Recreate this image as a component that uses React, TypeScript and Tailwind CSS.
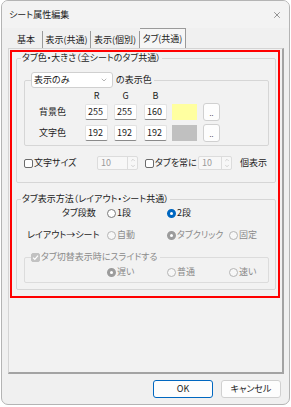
import { X, ChevronDown, ChevronUp } from "lucide-react"

// Small Win11-ish form controls
function Radio({ label, checked, disabled, className = "" }: { label: string; checked?: boolean; disabled?: boolean; className?: string }) {
  const ring = checked
    ? disabled
      ? "border-[3px] border-[#9c9c9c] bg-white"
      : "border-[3px] border-[#0067c0] bg-white"
    : disabled
      ? "border border-[#b5b5b5] bg-[#f7f7f7]"
      : "border border-[#7a7a7a] bg-white"
  return (
    <div className={"flex items-center " + className}>
      <span className={"w-[9px] h-[9px] rounded-full box-border shrink-0 " + ring} />
      <span className={"ml-[1px] " + (disabled ? "text-[#8a8a8a]" : "text-[#1b1b1b]")}>{label}</span>
    </div>
  )
}

function Check({ label, checked, disabled }: { label: string; checked?: boolean; disabled?: boolean }) {
  return (
    <div className="flex items-center">
      <span
        className={
          "w-[9px] h-[9px] rounded-[2px] box-border flex items-center justify-center shrink-0 " +
          (checked ? "bg-[#c2c2c2] border border-[#c2c2c2]" : "border border-[#6b6b6b] bg-white")
        }
      >
        {checked && (
          <svg width="7" height="7" viewBox="0 0 7 7">
            <path d="M1 3.6 L2.8 5.3 L6 1.6" fill="none" stroke="white" strokeWidth="1.2" />
          </svg>
        )}
      </span>
      <span className={"ml-[1px] " + (disabled ? "text-[#8a8a8a]" : "text-[#1b1b1b]")}>{label}</span>
    </div>
  )
}

function NumBox({ value }: { value: number }) {
  return (
    <div className="w-[23px] h-[16px] bg-white border border-[#e2e2e2] border-b-[#8a8a8a] rounded-[2px] box-border pl-[2px] leading-[14px] text-[#1b1b1b]">
      {value}
    </div>
  )
}

function Dots() {
  return (
    <div className="w-[17px] h-[18px] bg-[#fdfdfd] border border-[#d0d0d0] rounded-[3px] box-border flex items-end justify-center pb-[3px]">
      <span className="text-[7px] leading-[7px] text-[#333]">..</span>
    </div>
  )
}

function Spin({ w }: { w: string }) {
  return (
    <div className={"h-[14px] bg-[#f7f7f7] border border-[#dcdcdc] rounded-[2px] box-border flex " + w}>
      <span className="flex-1 pl-[3px] leading-[12px] text-[#9a9a9a]">10</span>
      <span className="w-[10px] border-l border-[#dcdcdc] flex flex-col items-center justify-center text-[#9a9a9a]">
        <ChevronUp size={6} strokeWidth={1.5} />
        <ChevronDown size={6} strokeWidth={1.5} />
      </span>
    </div>
  )
}

const rgbRows = [
  { name: "背景色", values: [255, 255, 160], swatch: "bg-[#ffffa0]" },
  { name: "文字色", values: [192, 192, 192], swatch: "bg-[#c0c0c0]" },
]

export default function App() {
  return (
    <div className="w-[291px] h-[407px] bg-white font-['Noto_Sans_CJK_JP',sans-serif] [font-feature-settings:'palt'] text-[9px] leading-[12px] text-[#1b1b1b]">
      <div className="ml-[1px] w-[289px] h-[405px] rounded-[7px] border border-[#b4b4b4] bg-[#f0f0f0] box-border flex flex-col overflow-hidden">
        {/* Title bar */}
        <div className="h-[27px] shrink-0 bg-[#f3f3f3] flex items-center justify-between pl-[7px] pr-[7px]">
          <span className="text-[9px] text-[#1b1b1b]">シート属性編集</span>
          <X size={10} strokeWidth={1.2} className="text-[#333]" />
        </div>

        {/* Tabs */}
        <div className="h-[20px] shrink-0 flex items-end pl-[8px]">
          <div className="w-[33px] h-[17px] border-r border-[#9a9a9a] flex items-center justify-center">基本</div>
          <div className="w-[48px] h-[17px] border-r border-[#9a9a9a] flex items-center justify-center">表示(共通)</div>
          <div className="w-[49px] h-[17px] border-r border-[#9a9a9a] flex items-center justify-center">表示(個別)</div>
          <div className="w-[46px] h-[20px] border-r border-t border-[#9a9a9a] bg-[#f6f6f6] flex items-center justify-center">タブ(共通)</div>
        </div>

        {/* Tab panel */}
        <div className="ml-[6px] w-[276px] h-[326px] shrink-0 box-border border-l border-t border-[#d4d4d4] border-r-2 border-b-2 border-r-[#a3a3a3] border-b-[#a3a3a3] pl-[1px] pt-[1px] bg-[#f2f2f2]">
          <div className="w-[270px] h-[248px] box-border border-2 border-[#ff0000] flex flex-col">
            {/* Group 1 */}
            <fieldset className="ml-[4px] w-[260px] box-border border border-[#d6d6d6] rounded-[2px] px-[4px] pb-[12px]">
              <legend className="px-[1px] leading-[12px]">タブ色・大きさ（全シートのタブ共通）</legend>

              <fieldset className="ml-[3px] mt-[8px] w-[245px] box-border border border-[#d6d6d6] rounded-[2px] px-[6px] pb-[4px]">
                <legend className="pr-[2px]">
                  <div className="flex items-center">
                    <div className="w-[82px] h-[16px] bg-white border border-[#d0d0d0] rounded-[3px] box-border flex items-center justify-between pl-[2px] pr-[4px]">
                      <span>表示のみ</span>
                      <ChevronDown size={8} strokeWidth={1.3} className="text-[#555]" />
                    </div>
                    <span className="ml-[3px]">の表示色</span>
                  </div>
                </legend>

                <div className="mt-[2px] flex">
                  <div className="w-[54px]" />
                  <div className="w-[23px] text-center">R</div>
                  <div className="ml-[6px] w-[23px] text-center">G</div>
                  <div className="ml-[7px] w-[23px] text-center">B</div>
                </div>

                <div className="mt-[2px] flex flex-col gap-[5px]">
                  {rgbRows.map((r) => (
                    <div key={r.name} className="flex items-center h-[16px]">
                      <div className="w-[54px] pl-[8px]">{r.name}</div>
                      <NumBox value={r.values[0]} />
                      <div className="ml-[6px]"><NumBox value={r.values[1]} /></div>
                      <div className="ml-[7px]"><NumBox value={r.values[2]} /></div>
                      <div className={"ml-[5px] w-[25px] h-[16px] " + r.swatch} />
                      <div className="ml-[6px]"><Dots /></div>
                    </div>
                  ))}
                </div>
              </fieldset>

              <div className="ml-[3px] mt-[10px] flex items-center">
                <div className="w-[73px]"><Check label="文字サイズ" /></div>
                <Spin w="w-[41px]" />
                <div className="ml-[7px] w-[53px]"><Check label="タブを常に" /></div>
                <Spin w="w-[34px]" />
                <span className="ml-[8px]">個表示</span>
              </div>
            </fieldset>

            {/* Group 2 */}
            <fieldset className="ml-[4px] mt-[10px] w-[260px] box-border border border-[#d6d6d6] rounded-[2px] px-[4px] pb-[6px]">
              <legend className="px-[1px] leading-[12px]">タブ表示方法（レイアウト・シート共通）</legend>

              <div className="mt-[2px] flex items-center h-[12px]">
                <div className="w-[86px] pl-[41px]">タブ段数</div>
                <Radio label="1段" className="w-[60px]" />
                <Radio label="2段" checked />
              </div>

              <div className="mt-[10px] flex items-center h-[12px]">
                <div className="w-[86px] pl-[6px]">レイアウト→シート</div>
                <Radio label="自動" disabled className="w-[60px]" />
                <Radio label="タブクリック" checked disabled className="w-[62px]" />
                <Radio label="固定" disabled />
              </div>

              <fieldset className="ml-[3px] mt-[10px] w-[245px] box-border border border-[#dcdcdc] rounded-[2px] px-[6px] pb-[4px]">
                <legend className="pr-[2px]">
                  <Check label="タブ切替表示時にスライドする" checked disabled />
                </legend>
                <div className="mt-[3px] flex items-center h-[12px]">
                  <div className="w-[76px]" />
                  <Radio label="遅い" checked disabled className="w-[60px]" />
                  <Radio label="普通" disabled className="w-[62px]" />
                  <Radio label="速い" disabled />
                </div>
              </fieldset>
            </fieldset>
          </div>
        </div>

        {/* Buttons */}
        <div className="mt-[6px] flex justify-end gap-[8px] pr-[8px]">
          <button className="w-[60px] h-[18px] bg-[#fdfdfd] border border-[#0067c0] rounded-[3px] box-border leading-[16px]">OK</button>
          <button className="w-[60px] h-[18px] bg-[#fdfdfd] border border-[#d0d0d0] rounded-[3px] box-border leading-[16px]">キャンセル</button>
        </div>
      </div>
    </div>
  )
}
